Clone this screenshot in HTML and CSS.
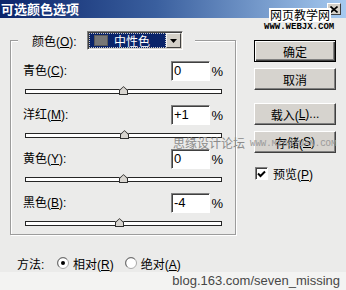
FILE: index.html
```html
<!DOCTYPE html>
<html lang="zh-CN">
<head>
<meta charset="utf-8">
<title>可选颜色选项</title>
<link rel="stylesheet" href="styles.css">
</head>
<body>
<div class="dialog">
  <div class="titlebar">
    <span class="title">可选颜色选项</span>
    <span class="close"><svg width="8" height="7" viewBox="0 0 8 7"><path d="M0.5 0.5 L7.5 6.5 M7.5 0.5 L0.5 6.5" stroke="#000" stroke-width="1.6"/></svg></span>
  </div>

  <div class="main">
    <fieldset class="group">
      <legend class="legend">
        <span class="legend-label">颜色(<u>O</u>):</span>
        <span class="select">
          <span class="sel-value"><span class="swatch"></span><span class="sel-text">中性色</span></span>
          <span class="sel-arrow"><svg width="7" height="4" viewBox="0 0 7 4"><path d="M0 0 H7 L3.5 4 Z" fill="#000"/></svg></span>
        </span>
      </legend>

      <div class="row"><span class="label">青色(<u>C</u>):</span><span class="input">0</span><span class="pct">%</span></div>
      <div class="track"><span class="thumb" style="left:93px"></span></div>

      <div class="row"><span class="label">洋红(<u>M</u>):</span><span class="input">+1</span><span class="pct">%</span></div>
      <div class="track"><span class="thumb" style="left:94px"></span></div>

      <div class="row"><span class="label">黄色(<u>Y</u>):</span><span class="input">0</span><span class="pct">%</span></div>
      <div class="track"><span class="thumb" style="left:93px"></span></div>

      <div class="row"><span class="label">黑色(<u>B</u>):</span><span class="input">-4</span><span class="pct">%</span></div>
      <div class="track"><span class="thumb" style="left:89px"></span></div>
    </fieldset>

    <div class="side">
      <span class="btn btn-default">确定</span>
      <span class="btn gap-s">取消</span>
      <span class="btn gap-l">载入(<u>L</u>)...</span>
      <span class="btn gap-s">存储(<u>S</u>)</span>
      <label class="check">
        <span class="checkbox"><svg width="9" height="8" viewBox="0 0 9 8"><path d="M1 3.5 L3.5 6 L8 1.5" fill="none" stroke="#000" stroke-width="2"/></svg></span>
        <span>预览(<u>P</u>)</span>
      </label>
    </div>
  </div>

  <div class="method">
    <span class="method-label">方法:</span>
    <span class="radio"><svg width="12" height="12" viewBox="0 0 12 12"><circle cx="6" cy="6" r="5.5" fill="#fff" stroke="#a8a8a8"/><path d="M2.2 9.8 A5.2 5.2 0 0 1 9.8 2.2" fill="none" stroke="#6a6a6a"/><circle cx="6" cy="6" r="2" fill="#000"/></svg></span>
    <span class="radio-text">相对(<u>R</u>)</span>
    <span class="radio radio-2"><svg width="12" height="12" viewBox="0 0 12 12"><circle cx="6" cy="6" r="5.5" fill="#fff" stroke="#a8a8a8"/><path d="M2.2 9.8 A5.2 5.2 0 0 1 9.8 2.2" fill="none" stroke="#6a6a6a"/></svg></span>
    <span class="radio-text">绝对(<u>A</u>)</span>
  </div>

  <div class="footer">blog.163.com/seven_missing</div>

  <div class="wm wm-webjx-cn">网页教学网</div>
  <div class="wm wm-webjx-en">WWW.WEBJX.COM</div>
  <div class="wm wm-missyuan-cn">思缘设计论坛</div>
  <div class="wm wm-missyuan-en">WWW.MISSYUAN.COM</div>
</div>
</body>
</html>
```

FILE: styles.css
```css
html, body {
  margin: 0;
  padding: 0;
}

body {
  width: 346px;
  height: 290px;
  overflow: hidden;
  background: #ebebea;
  font-family: "Liberation Sans", "Noto Sans CJK SC", sans-serif;
  font-size: 12px;
  color: #000;
}

.dialog {
  position: relative;
  width: 346px;
  height: 290px;
}

u {
  text-decoration: underline;
  text-underline-offset: 1px;
}

/* Title bar */
.titlebar {
  height: 18px;
  display: flex;
  align-items: center;
  padding-left: 1px;
  background: linear-gradient(to right, #0a246a 0%, #3a5f9e 45%, #a6caf0 100%);
  color: #fff;
}

.title {
  font-family: "Noto Sans CJK SC", sans-serif;
  font-weight: bold;
  font-size: 13px;
  line-height: 18px;
  letter-spacing: 0;
}

.close {
  margin-left: auto;
  margin-right: 5px;
  box-sizing: border-box;
  width: 14px;
  height: 12px;
  background: #d4d0c8;
  border: 1px solid;
  border-color: #fff #404040 #404040 #fff;
  display: flex;
  align-items: center;
  justify-content: center;
}

/* Main area */
.main {
  display: flex;
  align-items: flex-start;
  padding: 13px 0 0 10px;
}

.group {
  box-sizing: border-box;
  width: 226px;
  min-width: 0;
  margin: 0;
  padding: 0 0 8px 0;
  border: 1px solid #9c9c9c;
  box-shadow: 1px 1px 0 #ffffff, inset 1px 1px 0 #ffffff;
}

.legend {
  display: flex;
  align-items: center;
  margin-left: 7px;
  padding: 0 12px 0 14px;
  height: 19px;
  background: #ebebea;
}

.legend-label {
  width: 55px;
  font-family: "Liberation Sans", "Noto Sans CJK SC", sans-serif;
}

.select {
  box-sizing: border-box;
  display: flex;
  width: 96px;
  height: 19px;
  padding: 1px;
  background: #fff;
  border: 1px solid;
  border-color: #808080 #ffffff #ffffff #808080;
  box-shadow: inset 1px 1px 0 #404040, inset -1px -1px 0 #d4d0c8;
}

.sel-value {
  flex: 1;
  display: flex;
  align-items: center;
  background: #0a246a;
  outline: 1px dotted #c8c8c8;
  outline-offset: -1px;
  color: #fff;
}

.swatch {
  width: 14px;
  height: 11px;
  margin-left: 5px;
  background: #777777;
  box-shadow: inset 0 0 0 1px #5a5a5a;
}

.sel-text {
  margin-left: 6px;
  font-family: "Noto Sans CJK SC", sans-serif;
}

.sel-arrow {
  box-sizing: border-box;
  width: 15px;
  background: #d4d0c8;
  border: 1px solid;
  border-color: #f4f4f4 #404040 #404040 #f4f4f4;
  display: flex;
  align-items: center;
  justify-content: center;
}

.row {
  display: flex;
  align-items: center;
  height: 20px;
  margin-top: 11px;
  padding: 0 12px;
}

.row:first-of-type {
  margin-top: 11px;
}

.label {
  flex: 1;
  line-height: 20px;
}

.input {
  box-sizing: border-box;
  width: 39px;
  height: 20px;
  padding-left: 2px;
  background: #fff;
  border: 1px solid;
  border-color: #808080 #ffffff #ffffff #808080;
  box-shadow: inset 1px 1px 0 #404040;
  font-size: 13px;
  line-height: 18px;
}

.pct {
  width: 13px;
  text-align: right;
  font-size: 13px;
}

.track {
  position: relative;
  box-sizing: border-box;
  width: 197px;
  height: 5px;
  margin: 8px 0 0 14px;
  background: #fff;
  border: 1px solid #262626;
}

.thumb {
  position: absolute;
  top: -4px;
  width: 9px;
  height: 9px;
  background: #d8d5d0;
  clip-path: polygon(50% 0, 100% 45%, 100% 100%, 0 100%, 0 45%);
}

.thumb::before {
  content: "";
  position: absolute;
  inset: 0;
  background: #303030;
  clip-path: polygon(50% 0, 100% 45%, 100% 100%, 0 100%, 0 45%, 50% 0, 11% 50%, 11% 89%, 89% 89%, 89% 50%, 50% 11%, 11% 50%);
}

/* Side buttons */
.side {
  display: flex;
  flex-direction: column;
  align-items: flex-start;
  margin: 9px 0 0 18px;
}

.btn {
  box-sizing: border-box;
  width: 82px;
  height: 22px;
  display: flex;
  align-items: center;
  justify-content: center;
  background: #d6d3ce;
  border: 1px solid;
  border-color: #ffffff #404040 #404040 #ffffff;
  box-shadow: inset -1px -1px 0 #808080;
  font-family: "Liberation Sans", "Noto Sans CJK SC", sans-serif;
}

.btn-default {
  border-color: #000;
  box-shadow: inset 1px 1px 0 #ffffff, inset -1px -1px 0 #404040, inset -2px -2px 0 #808080;
}

.gap-s {
  margin-top: 6px;
}

.gap-l {
  margin-top: 13px;
}

.check {
  display: flex;
  align-items: center;
  margin: 12px 0 0 1px;
  gap: 5px;
}

.checkbox {
  box-sizing: border-box;
  width: 13px;
  height: 13px;
  background: #fff;
  border: 1px solid;
  border-color: #808080 #ffffff #ffffff #808080;
  box-shadow: inset 1px 1px 0 #404040;
  display: flex;
  align-items: center;
  justify-content: center;
}

/* Method row */
.method {
  display: flex;
  align-items: center;
  height: 16px;
  margin-top: 20px;
  padding-left: 17px;
}

.method-label {
  width: 40px;
}

.radio {
  display: flex;
  width: 12px;
  height: 12px;
}

.radio-text {
  margin-left: 4px;
}

.radio-2 {
  margin-left: 11px;
}

.footer {
  margin-top: 1px;
  height: 18px;
  padding-right: 6px;
  background: #f3f3f2;
  text-align: right;
  color: #474747;
  font-size: 13px;
  line-height: 18px;
}

/* Watermarks (overlays) */
.wm {
  position: absolute;
  white-space: nowrap;
}

.wm-webjx-cn {
  left: 269px;
  top: 8px;
  padding: 0 1px;
  background: #fff;
  color: #000;
  font-family: "Noto Sans CJK SC", sans-serif;
  font-size: 12px;
  line-height: 14px;
}

.wm-webjx-en {
  left: 264px;
  top: 23px;
  font-family: "Liberation Mono", monospace;
  font-weight: bold;
  font-size: 9px;
  line-height: 9px;
  color: #000;
}

.wm-missyuan-cn {
  left: 173px;
  top: 136px;
  font-family: "Noto Sans CJK SC", sans-serif;
  font-size: 12px;
  line-height: 14px;
  color: #8c8c8c;
}

.wm-missyuan-en {
  left: 250px;
  top: 140px;
  font-family: "Liberation Mono", monospace;
  font-size: 9px;
  line-height: 9px;
  color: #9a9a9a;
}
```
